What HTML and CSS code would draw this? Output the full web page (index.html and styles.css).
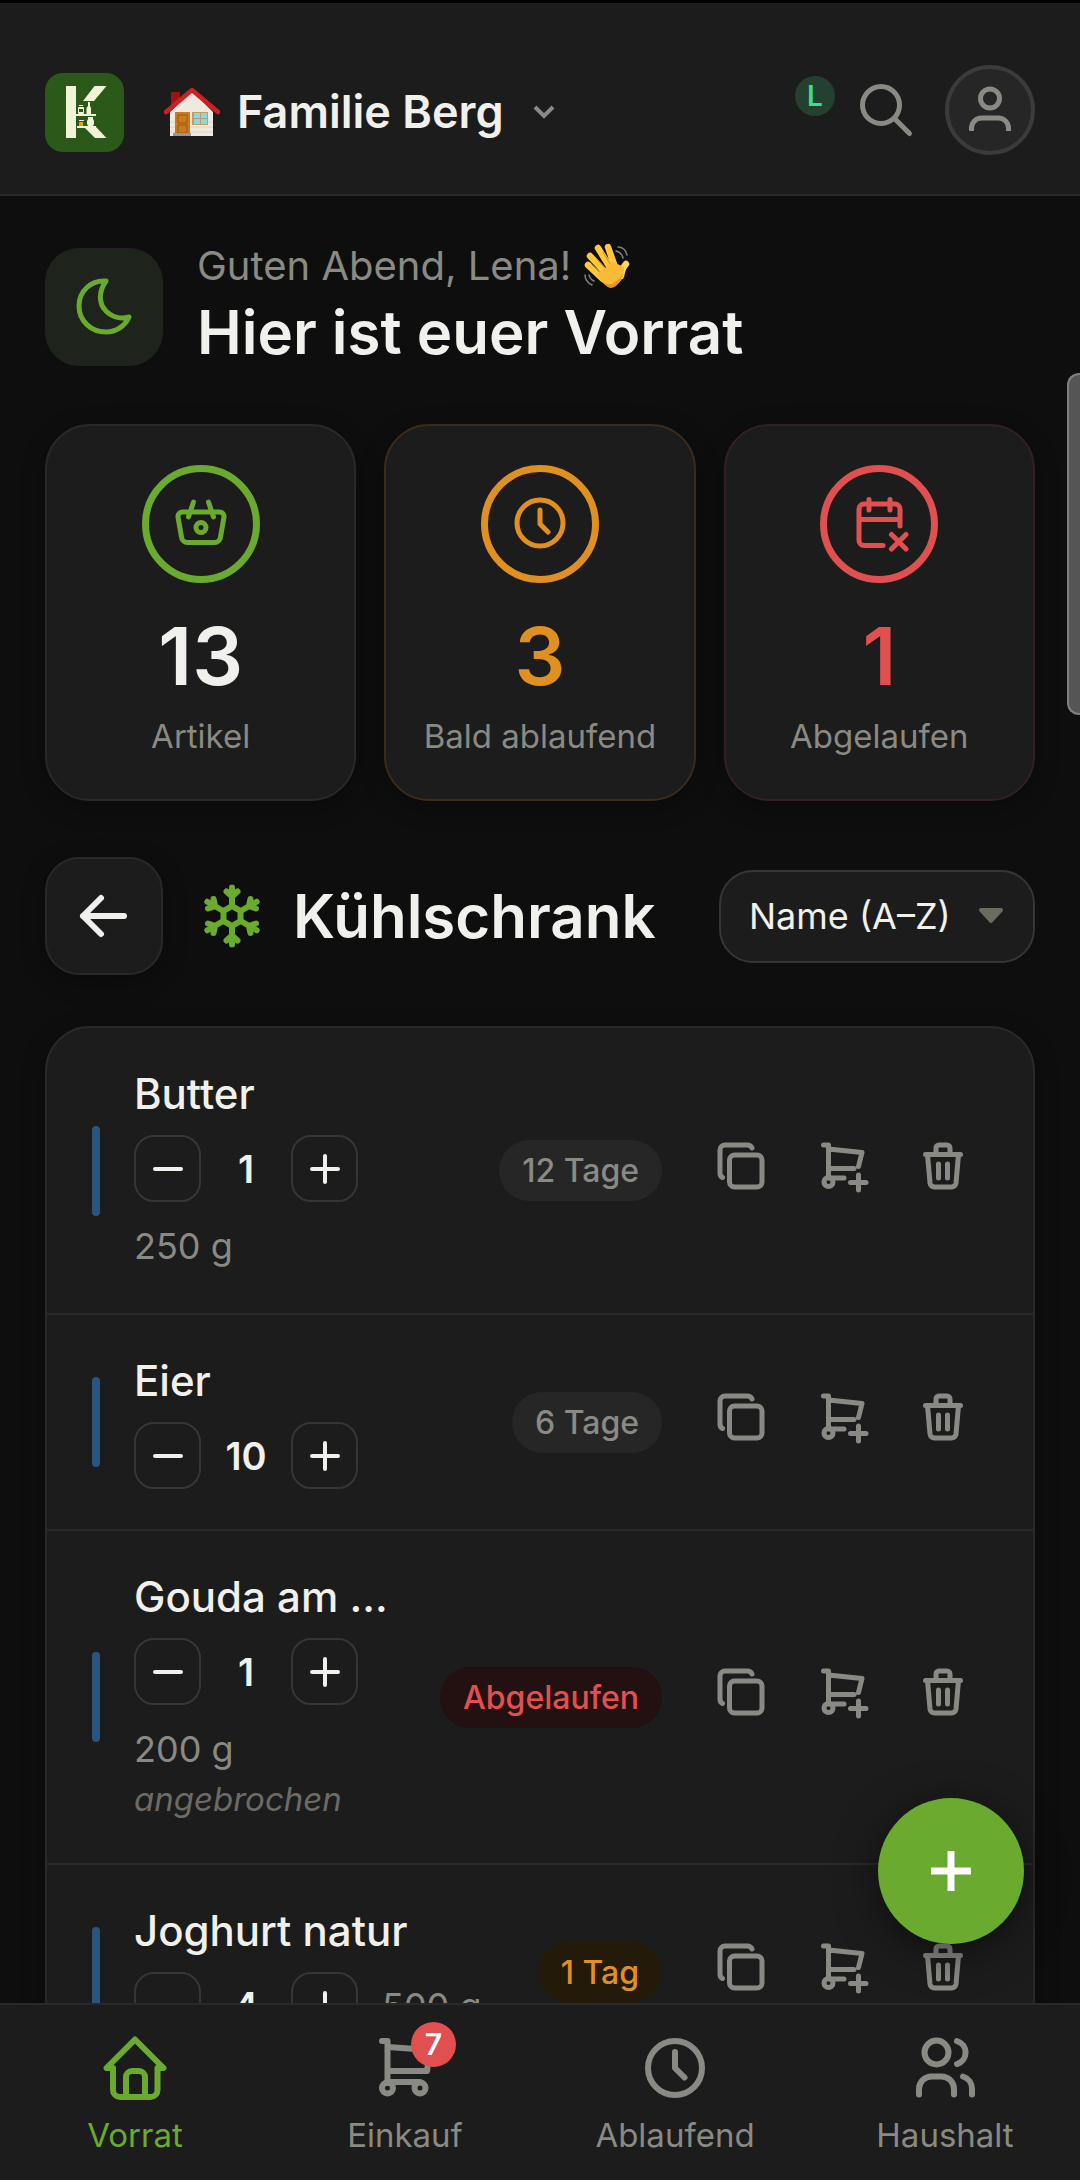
FILE: index.html
```html
<!DOCTYPE html>
<html lang="de">
<head>
    <meta charset="UTF-8">
    <meta name="viewport" content="width=device-width, initial-scale=1.0">
    <title>Vorrat - Kühlschrank</title>
    <link rel="stylesheet" href="styles.css">
</head>
<body>
    <!-- Icons, die mehrfach vorkommen -->
    <svg class="sprite" aria-hidden="true">
        <symbol id="i-minus" viewBox="0 0 32 32"><path d="M3 16H29"/></symbol>
        <symbol id="i-plus" viewBox="0 0 32 32"><path d="M3 16H29M16 3V29"/></symbol>
        <symbol id="i-copy" viewBox="0 0 62 62">
            <path d="M42 8a5 5 0 0 0-4.5-3H15a5 5 0 0 0-5 5v23a5 5 0 0 0 2.5 4.5"/>
            <rect x="19.5" y="15" width="32.5" height="32" rx="5"/>
        </symbol>
        <symbol id="i-cart-plus" viewBox="0 0 62 62">
            <path d="M12.5 5h5v33M17.5 9L51 12.5L47.5 26.5M17.5 28.5H43M17.5 38H33M39.5 42.5H55M47.5 35V50"/>
            <circle cx="17.5" cy="42" r="4.5"/>
        </symbol>
        <symbol id="i-trash" viewBox="0 0 62 62">
            <path d="M13.5 14.5H48.5M24 14.5V8a3 3 0 0 1 3-3h8a3 3 0 0 1 3 3v6.5M15.5 14.5L18 43a4.5 4.5 0 0 0 4.5 4h17a4.5 4.5 0 0 0 4.5-4L46.500 14.5M26.5 24V38M35.5 24V38"/>
        </symbol>
    </svg>

    <header class="topbar">
        <svg class="logo" viewBox="0 0 79 79" role="img" aria-label="Logo">
            <rect width="79" height="79" rx="18" fill="#2b591a"/>
            <g fill="#f1f4d6">
                <rect x="21" y="13" width="10" height="52"/>
                <path d="M49.5 13h12L49 28H38z"/>
                <path d="M39 54h12L61.5 65H50z"/>
                <rect x="31" y="41" width="20" height="2"/>
                <rect x="32" y="53" width="19" height="2"/>
                <rect x="33" y="34" width="6" height="7" rx="1"/>
                <rect x="34" y="32" width="4" height="1"/>
                <path d="M43 29h2v4l1 2v6h-4.5v-6l1.5-2z"/>
                <path d="M43 44h5v2l1 2v3l-1 2h-5l-1-2v-3l1-2z"/>
                <rect x="34" y="47" width="5" height="1"/>
            </g>
            <rect x="34" y="36" width="4" height="3" fill="#2b591a"/>
            <rect x="34" y="49" width="4" height="4" fill="#f39a12"/>
        </svg>
        <button class="household" type="button">
            <svg class="emoji-house" viewBox="0 0 56 50" aria-hidden="true">
                <path d="M7 5h9v14H7z" fill="#a30f12"/>
                <path d="M6 25L28 4l21 21v24H6z" fill="#efe9df"/>
                <path d="M6 35h43M6 40h43M6 45h43" stroke="#dcd4c8"/>
                <path d="M11 25h15v22H11z" fill="#c87a1c"/>
                <path d="M14 28h9v8h-9zM14 38h9v8h-9z" fill="none" stroke="#9c5a10"/>
                <rect x="28" y="25" width="16" height="13" fill="#c99a5c"/>
                <path d="M30 26h6v5h-6zM37 26h6v5h-6zM30 32h6v5h-6zM37 32h6v5h-6z" fill="#7fdcf5"/>
                <path d="M9 46h18v3H9z" fill="#8f979c"/>
                <path d="M2 25L28 3l26 22" fill="none" stroke="#cf1f22" stroke-width="4.5" stroke-linecap="round" stroke-linejoin="round"/>
            </svg>
            <span>Familie Berg</span>
            <svg class="chevron" viewBox="0 0 24 16" aria-hidden="true"><path d="M3 3l9 9l9-9"/></svg>
        </button>
        <div class="topbar-right">
            <span class="presence">L</span>
            <button class="icon-btn" type="button" aria-label="Suche">
                <svg class="icon" viewBox="0 0 62 62"><circle cx="26" cy="26" r="18.5"/><path d="M39.5 39.5L54.5 54.5"/></svg>
            </button>
            <button class="avatar" type="button" aria-label="Profil">
                <svg class="icon" viewBox="0 0 62 62"><circle cx="31" cy="19.5" r="9.5"/><path class="butt" d="M12.5 52v-3a10 10 0 0 1 10-10h17a10 10 0 0 1 10 10v3"/></svg>
            </button>
        </div>
    </header>

    <main class="content">
        <section class="greeting">
            <div class="greeting-icon">
                <svg class="icon" viewBox="0 0 62 62"><path d="M33 5C26 15 25 27 33 35C40 42 49 43 56 41C52 50 43 56 33 56C18 56 6 45 6 30C6 15 18 4 33 5Z"/></svg>
            </div>
            <div class="greeting-text">
                <p>Guten Abend, Lena!
                    <svg class="emoji-hand" viewBox="0 0 47 46" aria-hidden="true">
                        <g fill="none" stroke-linecap="round">
                            <g stroke="#ffc83d" stroke-width="6.5">
                                <path d="M5 22L20 36M7 13L23 30M15 5L28 26M25 4L32 24"/>
                                <path d="M43 21C40 24 39 27 38 33" stroke="#fdd758"/>
                            </g>
                            <path d="M9 22L20 33M13 15L25 29M20 9L29 24" stroke="#dc8a1a"/>
                            <path d="M35 4c5 0 8 4 9 8M33 8c4 1 6 3 7 7M2 32c0 5 3 8 7 10M6 32c1 3 2 5 5 6" stroke="#7c8089" stroke-width="1.5"/>
                        </g>
                        <path d="M14 31L30 19L41 24C42 34 36 43 28 44C22 44 18 38 14 31Z" fill="#f9bb35"/>
                        <path d="M21 40C28 44 36 38 39 31C38 39 33 45 27 45C24 44 22 42 21 40Z" fill="#e8922a"/>
                    </svg>
                </p>
                <h1>Hier ist euer Vorrat</h1>
            </div>
        </section>

        <section class="stats">
            <div class="stat">
                <div class="stat-ring">
                    <svg class="icon" viewBox="0 0 62 62"><path d="M12.5 19h37a4.5 4.5 0 0 1 4.5 5L50.5 44a6 6 0 0 1-6 5.5h-27a6 6 0 0 1-6-5.5L8 24a4.5 4.5 0 0 1 4.5-5zM23.5 9L18.5 24M38.5 9L43.5 24"/><circle cx="31" cy="34.5" r="5"/></svg>
                </div>
                <strong>13</strong>
                <span>Artikel</span>
            </div>
            <div class="stat soon">
                <div class="stat-ring">
                    <svg class="icon" viewBox="0 0 62 62"><circle cx="31" cy="30" r="23"/><path d="M31 17V31L39 39"/></svg>
                </div>
                <strong>3</strong>
                <span>Bald ablaufend</span>
            </div>
            <div class="stat expired">
                <div class="stat-ring">
                    <svg class="icon" viewBox="0 0 62 62"><path d="M35 52.5H16a5 5 0 0 1-5-5V16a5 5 0 0 1 5-5h31a5 5 0 0 1 5 5V33M11 26.5H52M21 6.5V17M42 6.5V17M43.5 41.5L58 56M58 41.5L43.5 56"/></svg>
                </div>
                <strong>1</strong>
                <span>Abgelaufen</span>
            </div>
        </section>

        <section class="place-head">
            <button class="back" type="button" aria-label="Zurück">
                <svg class="icon" viewBox="0 0 62 62"><path d="M51 31H10M28 13L10 31L28 49"/></svg>
            </button>
            <svg class="snow" viewBox="0 0 66 66" aria-hidden="true">
                <defs><path id="arm" d="M33 23V4.5M27.5 8.5L33 13.5L38.5 8.5"/></defs>
                <path d="M33 23L41.5 28V38L33 43L24.5 38V28Z"/>
                <use href="#arm"/>
                <use href="#arm" transform="rotate(60 33 33)"/>
                <use href="#arm" transform="rotate(120 33 33)"/>
                <use href="#arm" transform="rotate(180 33 33)"/>
                <use href="#arm" transform="rotate(240 33 33)"/>
                <use href="#arm" transform="rotate(300 33 33)"/>
            </svg>
            <h2>Kühlschrank</h2>
            <div class="sort">
                <select aria-label="Sortierung">
                    <option>Name (A–Z)</option>
                    <option>Name (Z–A)</option>
                    <option>Ablaufdatum</option>
                </select>
                <svg viewBox="0 0 26 18" aria-hidden="true"><path d="M3 3H23L13 14Z"/></svg>
            </div>
        </section>

        <ul class="items">
            <li class="item">
                <span class="bar"></span>
                <div class="info">
                    <h3>Butter</h3>
                    <div class="amount">
                        <div class="stepper">
                            <button type="button" aria-label="Weniger"><svg><use href="#i-minus"/></svg></button>
                            <b>1</b>
                            <button type="button" aria-label="Mehr"><svg><use href="#i-plus"/></svg></button>
                        </div>
                        <span class="size">250 g</span>
                    </div>
                </div>
                <span class="pill">12 Tage</span>
                <div class="actions">
                    <button type="button" aria-label="Kopieren"><svg class="icon"><use href="#i-copy"/></svg></button>
                    <button type="button" aria-label="Auf die Einkaufsliste"><svg class="icon"><use href="#i-cart-plus"/></svg></button>
                    <button type="button" aria-label="Löschen"><svg class="icon"><use href="#i-trash"/></svg></button>
                </div>
            </li>
            <li class="item">
                <span class="bar"></span>
                <div class="info">
                    <h3>Eier</h3>
                    <div class="amount">
                        <div class="stepper">
                            <button type="button" aria-label="Weniger"><svg><use href="#i-minus"/></svg></button>
                            <b>10</b>
                            <button type="button" aria-label="Mehr"><svg><use href="#i-plus"/></svg></button>
                        </div>
                    </div>
                </div>
                <span class="pill">6 Tage</span>
                <div class="actions">
                    <button type="button" aria-label="Kopieren"><svg class="icon"><use href="#i-copy"/></svg></button>
                    <button type="button" aria-label="Auf die Einkaufsliste"><svg class="icon"><use href="#i-cart-plus"/></svg></button>
                    <button type="button" aria-label="Löschen"><svg class="icon"><use href="#i-trash"/></svg></button>
                </div>
            </li>
            <li class="item">
                <span class="bar"></span>
                <div class="info">
                    <h3>Gouda am Stück</h3>
                    <div class="amount">
                        <div class="stepper">
                            <button type="button" aria-label="Weniger"><svg><use href="#i-minus"/></svg></button>
                            <b>1</b>
                            <button type="button" aria-label="Mehr"><svg><use href="#i-plus"/></svg></button>
                        </div>
                        <span class="size">200 g</span>
                    </div>
                    <em>angebrochen</em>
                </div>
                <span class="pill pill-expired">Abgelaufen</span>
                <div class="actions">
                    <button type="button" aria-label="Kopieren"><svg class="icon"><use href="#i-copy"/></svg></button>
                    <button type="button" aria-label="Auf die Einkaufsliste"><svg class="icon"><use href="#i-cart-plus"/></svg></button>
                    <button type="button" aria-label="Löschen"><svg class="icon"><use href="#i-trash"/></svg></button>
                </div>
            </li>
            <li class="item">
                <span class="bar"></span>
                <div class="info">
                    <h3>Joghurt natur</h3>
                    <div class="amount">
                        <div class="stepper">
                            <button type="button" aria-label="Weniger"><svg><use href="#i-minus"/></svg></button>
                            <b>4</b>
                            <button type="button" aria-label="Mehr"><svg><use href="#i-plus"/></svg></button>
                        </div>
                        <span class="size">500 g</span>
                    </div>
                </div>
                <span class="pill pill-soon">1 Tag</span>
                <div class="actions">
                    <button type="button" aria-label="Kopieren"><svg class="icon"><use href="#i-copy"/></svg></button>
                    <button type="button" aria-label="Auf die Einkaufsliste"><svg class="icon"><use href="#i-cart-plus"/></svg></button>
                    <button type="button" aria-label="Löschen"><svg class="icon"><use href="#i-trash"/></svg></button>
                </div>
            </li>
        </ul>
    </main>

    <nav class="tabs">
        <a class="active" href="#vorrat">
            <svg viewBox="0 0 70 70" aria-hidden="true"><path d="M13 35H6.5L35 6.5L63.5 35H57.5M13 35V57a7 7 0 0 0 7 7h30.5a7 7 0 0 0 7-7V35M26 64V44a6 6 0 0 1 6-6h7a6 6 0 0 1 6 6V64"/></svg>
            Vorrat
        </a>
        <a href="#einkauf">
            <span class="tab-icon">
                <svg viewBox="0 0 70 70" aria-hidden="true"><path d="M12 8h5.5V50M17.5 14L60 17L57 38H17.5M17.5 49H50"/><circle cx="17.5" cy="55" r="5.5"/><circle cx="50" cy="55" r="5.5"/></svg>
                <span class="count">7</span>
            </span>
            Einkauf
        </a>
        <a href="#ablaufend">
            <svg viewBox="0 0 70 70" aria-hidden="true"><circle cx="35" cy="35" r="27"/><path d="M35 19V35L44.5 44.5"/></svg>
            Ablaufend
        </a>
        <a href="#haushalt">
            <svg viewBox="0 0 70 70" aria-hidden="true"><circle cx="26.5" cy="19.5" r="12"/><path d="M9 61.5V56a12.5 12.5 0 0 1 12.5-12.5h10A12.5 12.5 0 0 1 44 56v5.5M47 8a12 12 0 0 1 0 23M53 43.5a13 13 0 0 1 9 12.5v5.5"/></svg>
            Haushalt
        </a>
        <button class="fab" type="button" aria-label="Artikel hinzufügen">
            <svg viewBox="0 0 40 40"><path d="M0 20H40M20 0V40"/></svg>
        </button>
    </nav>

    <div class="scroll-thumb"></div>
</body>
</html>
```
FILE: styles.css
```css
* {
    box-sizing: border-box;
}

body {
    margin: 0;
    height: 100vh;
    display: flex;
    flex-direction: column;
    overflow: hidden;
    background: #0e0e0e;
    color: #f0f0ec;
    font-family: Inter, "Liberation Sans", sans-serif;
}

h1, h2, h3, p, ul {
    margin: 0;
    padding: 0;
}

button {
    display: flex;
    align-items: center;
    justify-content: center;
    padding: 0;
    border: 0;
    background: none;
    color: inherit;
    font: inherit;
}

.sprite { display: none; }

.icon {
    width: 62px;
    height: 62px;
    fill: none;
    stroke: currentColor;
    stroke-width: 5;
    stroke-linecap: round;
    stroke-linejoin: round;
}

.butt { stroke-linecap: butt; }

/* Kopfzeile */
.topbar {
    display: flex;
    align-items: center;
    padding: 62px 45px 39px;
    border-top: 3px solid #000;
    border-bottom: 2px solid #292929;
    background: #1c1c1c;
}

.logo {
    width: 79px;
    height: 79px;
    margin: 4px 40px 0 0;
}

.household {
    margin-top: 4px;
    font-size: 45px;
    font-weight: 600;
    line-height: 60px;
}

.emoji-house {
    width: 56px;
    height: 50px;
    margin-right: 17px;
}

.chevron {
    width: 24px;
    height: 16px;
    margin-left: 28px;
    fill: none;
    stroke: #8a8a84;
    stroke-width: 4;
}

.topbar-right {
    display: flex;
    align-items: flex-start;
    margin-left: auto;
}

.presence {
    width: 40px;
    height: 40px;
    margin: 11px 20px 0 0;
    border-radius: 50%;
    background: #24402f;
    color: #3ddc91;
    font-size: 28px;
    font-weight: 600;
    line-height: 40px;
    text-align: center;
}

.icon-btn {
    height: 90px;
    margin-right: 28px;
    color: #8a8a84;
}

.avatar {
    width: 90px;
    height: 90px;
    border: 4px solid #3b3b3b;
    border-radius: 50%;
    background: #262626;
    color: #8a8a84;
}

/* Inhalt */
.content {
    flex: 1;
    min-height: 0;
    padding: 45px 45px 0;
    overflow-y: auto;
    scrollbar-width: none;
}

.greeting {
    display: flex;
    align-items: center;
    gap: 34px;
    margin-bottom: 51px;
}

.greeting-icon {
    display: flex;
    align-items: center;
    justify-content: center;
    width: 118px;
    height: 118px;
    border-radius: 34px;
    background: #1e241b;
    color: #6aaa2e;
}

.greeting-text { padding-bottom: 6px; }

.greeting p {
    margin-bottom: 6px;
    color: #8a8a84;
    font-size: 40px;
    line-height: 50px;
}

.emoji-hand {
    width: 47px;
    height: 46px;
    vertical-align: -9px;
}

.greeting h1 {
    font-size: 60px;
    font-weight: 600;
    line-height: 70px;
}

.stats {
    display: grid;
    grid-template-columns: repeat(3, 1fr);
    gap: 28px;
    margin-bottom: 56px;
}

.stat {
    display: flex;
    flex-direction: column;
    align-items: center;
    padding: 39px 0;
    border: 2px solid #292929;
    border-radius: 45px;
    background: #1c1c1c;
    box-shadow: 0 6px 24px rgba(0, 0, 0, 0.3);
}

.stat-ring {
    display: flex;
    align-items: center;
    justify-content: center;
    width: 118px;
    height: 118px;
    margin-bottom: 28px;
    border: 7px solid;
    border-radius: 50%;
    color: #6aaa2e;
}

.stat strong {
    margin-bottom: 11px;
    font-size: 80px;
    font-weight: 600;
    line-height: 90px;
}

.stat span {
    color: #8a8a84;
    font-size: 33px;
    line-height: 48px;
}

.soon { border-color: #3a2b1a; }
.soon .stat-ring, .soon strong { color: #e09020; }
.expired { border-color: #352021; }
.expired .stat-ring, .expired strong { color: #e05050; }

.place-head {
    display: flex;
    align-items: center;
    margin-bottom: 51px;
}

.back {
    width: 118px;
    height: 118px;
    margin-right: 36px;
    border: 2px solid #292929;
    border-radius: 34px;
    background: #1c1c1c;
    box-shadow: 0 6px 24px rgba(0, 0, 0, 0.3);
}

.back .icon { stroke-width: 6; }

.snow {
    width: 66px;
    height: 66px;
    margin-right: 28px;
    fill: none;
    stroke: #6aaa2e;
    stroke-width: 6;
    stroke-linecap: round;
    stroke-linejoin: round;
}

.place-head h2 {
    flex: 1;
    font-size: 60px;
    font-weight: 600;
    line-height: 70px;
}

.sort { position: relative; }

.sort select {
    display: block;
    width: 316px;
    height: 93px;
    padding: 0 28px;
    appearance: none;
    border: 2px solid #363636;
    border-radius: 34px;
    background: #1c1c1c;
    color: #f0f0ec;
    font-family: inherit;
    font-size: 36px;
}

.sort svg {
    position: absolute;
    right: 31px;
    top: 37px;
    width: 26px;
    height: 18px;
    fill: #6b6b5e;
    stroke: #6b6b5e;
    stroke-width: 4;
    stroke-linejoin: round;
    pointer-events: none;
}

/* Artikelliste */
.items {
    list-style: none;
    border: 2px solid #292929;
    border-radius: 45px;
    background: #1c1c1c;
    box-shadow: 0 6px 24px rgba(0, 0, 0, 0.3);
}

.item {
    display: flex;
    align-items: center;
    gap: 34px;
    padding: 40px 45px;
    border-bottom: 2px solid #292929;
}

.item:last-child { border-bottom: 0; }

.bar {
    width: 8px;
    height: 90px;
    border-radius: 4px;
    background: #2a5580;
}

.info {
    flex: 1;
    min-width: 0;
}

.info h3 {
    margin-bottom: 15px;
    overflow: hidden;
    font-size: 42px;
    font-weight: 500;
    line-height: 52px;
    text-overflow: ellipsis;
    white-space: nowrap;
}

.amount {
    display: flex;
    flex-wrap: wrap;
    align-items: center;
    gap: 17px 24px;
}

.stepper {
    display: flex;
    align-items: center;
}

.stepper button {
    width: 67px;
    height: 67px;
    border: 2px solid #363636;
    border-radius: 20px;
}

.stepper svg {
    width: 32px;
    height: 32px;
    stroke: currentColor;
    stroke-width: 4;
    stroke-linecap: round;
}

.stepper b {
    width: 90px;
    font-size: 38px;
    font-weight: 600;
    text-align: center;
}

.size {
    color: #8a8a84;
    font-size: 36px;
    line-height: 54px;
}

.info em {
    display: block;
    color: #6b6b66;
    font-size: 33px;
    line-height: 47px;
}

.pill {
    padding: 0 23px;
    border-radius: 31px;
    background: #262626;
    color: #8a8a84;
    font-size: 32px;
    font-weight: 500;
    line-height: 61px;
    white-space: nowrap;
}

.pill-expired {
    background: #231011;
    color: #e05050;
}

.pill-soon {
    background: #231a0a;
    color: #e09020;
}

.actions {
    display: flex;
    gap: 11px;
    color: #8a8a84;
}

.actions button {
    width: 90px;
    height: 90px;
}

/* Untere Navigation */
.tabs {
    position: relative;
    display: grid;
    grid-template-columns: repeat(4, 1fr);
    padding: 28px 0 25px;
    border-top: 2px solid #292929;
    background: #1c1c1c;
}

.tabs a {
    display: flex;
    flex-direction: column;
    align-items: center;
    gap: 12px;
    color: #8a8a84;
    font-size: 33px;
    line-height: 40px;
    text-decoration: none;
}

.tabs a.active { color: #6aaa2e; }

.tabs a svg {
    display: block;
    width: 70px;
    height: 70px;
    fill: none;
    stroke: currentColor;
    stroke-width: 6;
    stroke-linecap: round;
    stroke-linejoin: round;
}

.tab-icon { position: relative; }

.count {
    position: absolute;
    top: -11px;
    right: -16px;
    width: 45px;
    height: 45px;
    border-radius: 50%;
    background: #e05050;
    color: #fff;
    font-size: 30px;
    font-weight: 600;
    line-height: 45px;
    text-align: center;
}

.fab {
    position: absolute;
    right: 56px;
    bottom: calc(100% + 61px);
    width: 146px;
    height: 146px;
    border-radius: 50%;
    background: #6aaa2e;
    box-shadow: 0 8px 40px rgba(0, 0, 0, 0.5);
}

.fab svg {
    width: 40px;
    height: 40px;
    stroke: #fff;
    stroke-width: 7;
}

.scroll-thumb {
    position: absolute;
    top: 373px;
    right: 0;
    width: 13px;
    height: 342px;
    border: 2px solid #808080;
    border-right: 0;
    border-radius: 12px 0 0 12px;
    background: #555;
}
```
